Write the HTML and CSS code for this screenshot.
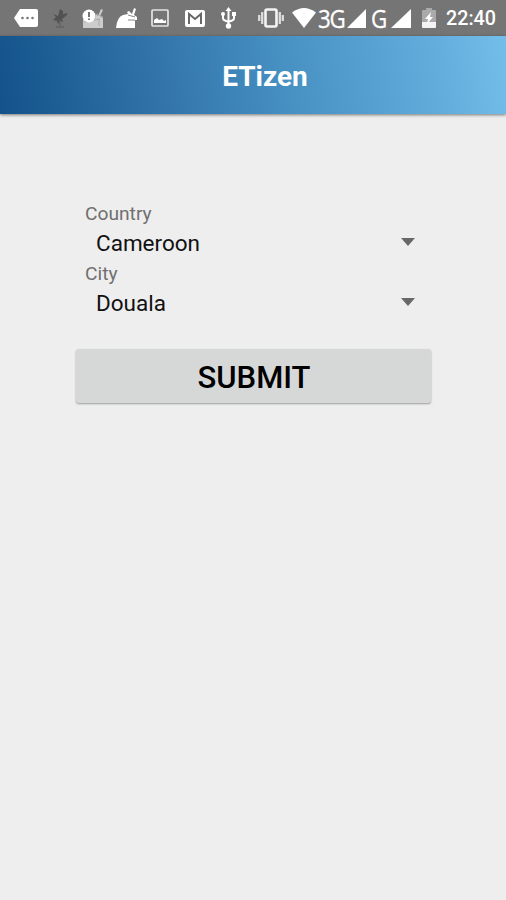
FILE: index.html
```html
<!DOCTYPE html>
<html lang="en">
<head>
<meta charset="utf-8">
<meta name="viewport" content="width=device-width, initial-scale=1">
<title>ETizen</title>
<link rel="stylesheet" href="styles.css">
</head>
<body>
<div class="status">
  <div class="notifications">
    <svg width="24" height="18" viewBox="0 0 24 18"><path fill="#fff" d="M6 0H22Q24 0 24 2V16Q24 18 22 18H6L0 9z"/><g fill="#777"><circle cx="8.5" cy="9" r="1.3"/><circle cx="13.5" cy="9" r="1.3"/><circle cx="18.5" cy="9" r="1.3"/></g></svg>
    <svg width="17" height="19" viewBox="0 0 17 19"><path fill="#525252" d="M8 0L11 2V5L16 4L14 7L10 10L11 13L8 12L6 15L5 12L1 11L4 8L1 5L6 7z"/><path stroke="#626262" stroke-width="1.4" d="M8 11V17M4 18H12"/></svg>
    <svg width="22" height="21" viewBox="0 0 22 21"><path fill="#ccc" d="M1 11H13L14 6L16 8L19 1L21 2L18 8L21 10V20H1z"/><path fill="none" stroke="#aaa" d="M2 14L18 11M15 6L21 9M17 11V18"/><circle cx="7" cy="8" r="6.5" fill="#fff"/><path stroke="#666" stroke-width="1.8" d="M7 4V9M7 10.500V12"/></svg>
    <svg width="22" height="21" viewBox="0 0 22 21"><path fill="#fff" d="M0 20Q1 9 7 7L12 6L11 4L13 3L16 6L18 0L20 1L18 7L21 9V12H19V20z"/><path fill="none" stroke="#888" d="M12 7L19 9M12 12L19 12"/></svg>
    <svg width="18" height="18" viewBox="0 0 18 18"><rect x="1" y="1" width="16" height="16" rx="1" fill="none" stroke="#e4e4e4" stroke-width="1.7"/><path fill="#fff" d="M3 14V11L6 9L8 11L11 10L13 12L15 11V14z"/></svg>
    <svg width="20" height="17" viewBox="0 0 20 17"><rect width="20" height="17" rx="2" fill="#fff"/><path fill="none" stroke="#686868" stroke-width="2" d="M4 14V4L10 9L16 4V14"/></svg>
    <svg width="15" height="22" viewBox="0 0 15 22"><path fill="none" stroke="#fff" stroke-width="2" d="M7.500 3V19M2 6V11Q2 13 4 13.500L7.500 15L11 13.500Q13 13 13 11V6"/><path fill="#fff" d="M7.500 0L10.500 4H4.500zM11 5H15V9H11z"/><circle cx="2" cy="7" r="2" fill="#fff"/><circle cx="7.500" cy="19" r="2.700" fill="#fff"/></svg>
  </div>
  <div class="system">
    <svg class="vibrate" width="26" height="20" viewBox="0 0 26 20"><rect x="7.500" y="1.500" width="11" height="17" rx="1.500" fill="#777" stroke="#f4f4f4" stroke-width="2.600"/><path fill="none" stroke="#ddd" stroke-width="2.300" d="M4.200 4V16M1.200 7V13M21.800 4V16M24.800 7V13"/></svg>
    <svg class="wifi" width="24" height="20" viewBox="0 0 24 20"><path fill="#fff" d="M0 4.500Q12 -4.500 24 4.500L12 20z"/></svg>
    <span class="network three">3G</span>
    <svg class="signal" width="19" height="19" viewBox="0 0 19 19"><path fill="#fff" d="M19 0V19H0z"/></svg>
    <span class="network single">G</span>
    <svg class="signal" width="20" height="19" viewBox="0 0 20 19"><path fill="#fff" d="M20 0V19H0z"/></svg>
    <svg class="battery" width="14" height="20" viewBox="0 0 14 20"><path fill="#aaa" d="M4 0H10V2H13Q14 2 14 3V14H0V3Q0 2 1 2H4z"/><path fill="#f4f4f4" d="M0 14H14V19Q14 20 13 20H1Q0 20 0 19z"/><path fill="#fff" d="M9 4L3 11H6L5 16L11 9H8z"/></svg>
    <time class="clock">22:40</time>
  </div>
</div>
<header class="appbar"><h1>ETizen</h1></header>
<main class="form">
  <div class="field">
    <div class="label">Country</div>
    <div class="select"><span>Cameroon</span><svg width="14" height="8" viewBox="0 0 14 8"><path fill="#686868" d="M0 0H14L7 8z"/></svg></div>
  </div>
  <div class="field">
    <div class="label">City</div>
    <div class="select"><span>Douala</span><svg width="14" height="8" viewBox="0 0 14 8"><path fill="#686868" d="M0 0H14L7 8z"/></svg></div>
  </div>
  <button class="submit" type="button">SUBMIT</button>
</main>
</body>
</html>
```
FILE: styles.css
```css
* { box-sizing: border-box; }
body {
  margin: 0;
  min-height: 900px;
  background: #eee;
  font-family: Roboto, "Liberation Sans", sans-serif;
}
svg { display: block; flex: none; }
.status {
  display: flex;
  justify-content: space-between;
  height: 36px;
  padding: 0 10px 0 14px;
  background: #757575;
  color: #fff;
}
.notifications, .system { display: flex; align-items: center; }
.notifications { width: 222px; }
.notifications svg + svg { margin-left: 13px; }
.notifications svg:nth-child(2) { margin-left: 14px; }
.notifications svg:nth-child(4) { margin-left: 12px; }
.notifications svg:nth-child(6) { margin-left: 16px; }
.notifications svg:nth-child(7) { margin-left: 16px; }
.system { width: 238px; }
.wifi { margin-left: 8px; }
.network {
  flex: none;
  font: 26px/37px "Open Sans", sans-serif;
  letter-spacing: -1.5px;
  transform: scaleX(.86);
  transform-origin: left;
  -webkit-text-stroke: .3px #fff;
}
.three { width: 29px; margin-left: 2px; }
.single { width: 20px; margin-left: 5px; }
.signal { margin-left: 0; }
.battery { margin-left: 11px; }
.clock {
  margin-left: 10px;
  font-size: 19.700px;
  font-weight: 500;
  line-height: 36px;
  padding-top: 2px;
}
.appbar {
  display: flex;
  align-items: center;
  justify-content: center;
  height: 78px;
  padding: 4px 0 0 24px;
  background: linear-gradient(80deg, #13528a 0%, #3578ae 35%, #4690c2 56%, #63addd 86%, #73bee9 100%);
  box-shadow: 0 1px 3px rgba(0, 0, 0, .5);
}
h1 {
  margin: 0;
  color: #fff;
  font-size: 28px;
  font-weight: 700;
  line-height: 32px;
}
.form { width: 355px; margin: 86px 0 0 76px; }
.field { height: 60px; padding-left: 9px; }
.label { color: #707070; font-size: 19.200px; line-height: 27px; }
.select {
  display: flex;
  align-items: center;
  justify-content: space-between;
  height: 32px;
  padding: 0 16px 0 11px;
  color: #111;
  font-size: 22.500px;
}
.select svg { margin-top: -2px; }
.submit {
  display: block;
  width: 100%;
  height: 54px;
  margin-top: 29px;
  padding: 3px 0 0 1px;
  border: 0;
  border-radius: 3px;
  background: #d6d8d7;
  box-shadow: 0 1px 2px rgba(0, 0, 0, .35);
  color: #000;
  font: 500 31px/36px Roboto, sans-serif;
}
```
